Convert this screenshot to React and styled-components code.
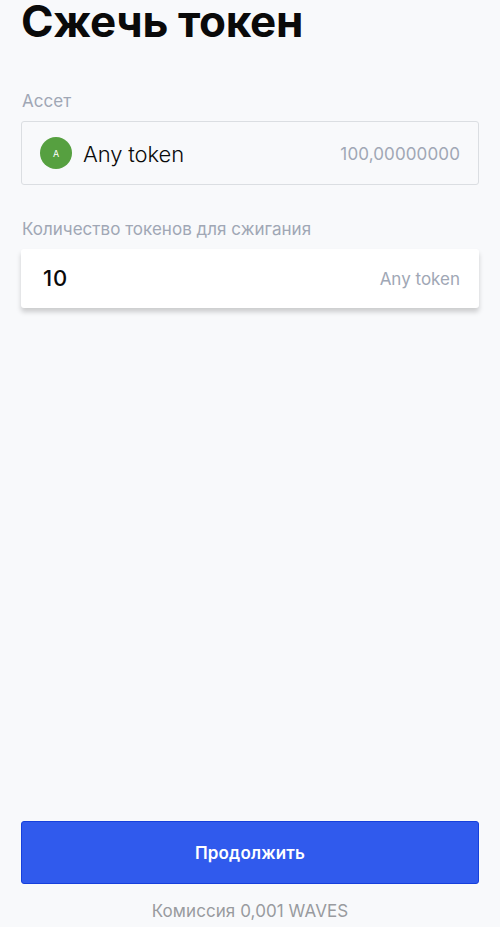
import React from "react";
import styled, { createGlobalStyle } from "styled-components";

const GlobalStyle = createGlobalStyle`
  * { box-sizing: border-box; }
  body { margin: 0; background: #f8f9fb; }
`;

const Screen = styled.main`
  display: flex;
  flex-direction: column;
  width: 500px;
  height: 927px;
  padding: 0 21px;
  background: #f8f9fb;
  font-family: Inter, "Liberation Sans", sans-serif;
  color: #0a0a0a;
`;

const Title = styled.h1`
  margin: 0;
  height: 48px;
  font-size: 44px;
  line-height: 42px;
  font-weight: 700;
  letter-spacing: -0.35px;
  white-space: nowrap;
`;

const Label = styled.label`
  display: block;
  margin-top: ${(p) => p.$gap}px;
  padding-left: 1px;
  height: 22px;
  font-size: 17px;
  line-height: 22px;
  letter-spacing: 0.02px;
  color: #a0a7b5;
  white-space: nowrap;
`;

const Field = styled.div`
  display: flex;
  align-items: center;
  justify-content: space-between;
  white-space: nowrap;
`;

const AssetField = styled(Field)`
  height: 64px;
  margin-top: 9px;
  padding: 0 18px;
  border: 1px solid #dbdee2;
  border-radius: 3px;
`;

const AmountField = styled(Field)`
  height: 59px;
  margin-top: 9px;
  padding: 0 19px 0 22px;
  border-radius: 3px;
  background: #fff;
  box-shadow: 0 4px 5px rgba(0, 0, 0, 0.18);
`;

const Asset = styled.div`
  display: flex;
  align-items: center;
  gap: 11px;
`;

const AssetLogo = styled.span`
  display: grid;
  place-items: center;
  width: 32px;
  height: 32px;
  border-radius: 50%;
  background: #56a040;
  color: #fff;
  font-size: 9px;
`;

const AssetName = styled.span`
  padding-top: 1px;
  font-size: 22px;
  font-weight: 350;
  letter-spacing: -0.12px;
`;

const Secondary = styled.span`
  padding-top: ${(p) => (p.$lowered ? 1 : 0)}px;
  font-size: 17px;
  letter-spacing: ${(p) => (p.$lowered ? 0.12 : 0)}px;
  color: #a0a7b5;
`;

const Amount = styled.span`
  font-size: 22px;
  line-height: 24px;
  font-weight: 500;
  letter-spacing: 0.8px;
  padding-bottom: 2px;
`;

const Footer = styled.footer`
  display: flex;
  flex-direction: column;
  margin-top: auto;
  height: 106px;
`;

const ContinueButton = styled.button`
  height: 63px;
  border: 1px solid #1640dc;
  border-radius: 3px;
  background: #305aed;
  color: #fff;
  font: 600 17px/22px Inter, sans-serif;
  letter-spacing: 0.15px;
`;

const Fee = styled.p`
  margin: 16px 0 0;
  text-align: center;
  font-size: 17px;
  line-height: 22px;
  letter-spacing: 0.08px;
  color: #999b9f;
`;

export default function App() {
  return (
    <Screen>
      <GlobalStyle />
      <Title>Сжечь токен</Title>
      <Label $gap={42}>Ассет</Label>
      <AssetField>
        <Asset>
          <AssetLogo>A</AssetLogo>
          <AssetName>Any token</AssetName>
        </Asset>
        <Secondary $lowered>100,00000000</Secondary>
      </AssetField>
      <Label $gap={33}>Количество токенов для сжигания</Label>
      <AmountField>
        <Amount>10</Amount>
        <Secondary>Any token</Secondary>
      </AmountField>
      <Footer>
        <ContinueButton>Продолжить</ContinueButton>
        <Fee>Комиссия 0,001 WAVES</Fee>
      </Footer>
    </Screen>
  );
}
